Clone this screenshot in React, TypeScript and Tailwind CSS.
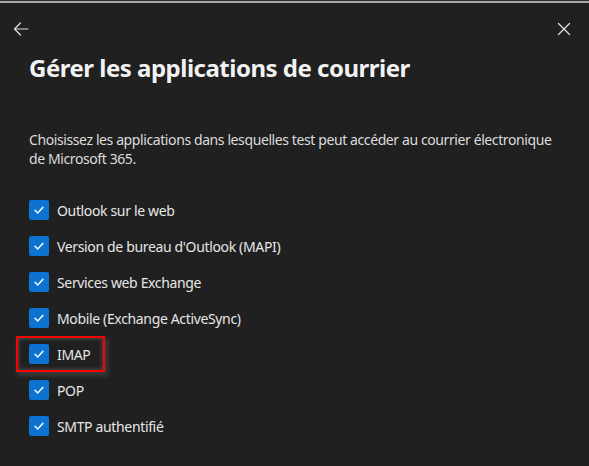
import React from "react";

const apps = [
  "Outlook sur le web",
  "Version de bureau d'Outlook (MAPI)",
  "Services web Exchange",
  "Mobile (Exchange ActiveSync)",
  "IMAP",
  "POP",
  "SMTP authentifié",
];

const Check = () => (
  <span className="flex h-5 w-5 shrink-0 items-center justify-center rounded-[2px] bg-[#0c74d0]">
    <svg width="12" height="12" viewBox="0 0 12 12" fill="none">
      <path d="M2 6.3L4.7 9L10 3.3" stroke="#fff" strokeWidth="1.4" strokeLinecap="round" strokeLinejoin="round" />
    </svg>
  </span>
);

export default function App() {
  return (
    <div
      className="h-[466px] w-[589px] overflow-hidden bg-[#202020] text-[#e6e6e6]"
      style={{ fontFamily: '"Segoe UI", "Noto Sans", "Open Sans", sans-serif' }}
    >
      <div className="h-px bg-[#2a2a2a]" />
      <div className="h-[2px] bg-[#a8a8a8]" />
      <div className="flex items-center justify-between pl-[12px] pr-[18px] pt-[17px]">
        <svg width="18" height="18" viewBox="0 0 18 18" fill="none">
          <path d="M16 9H2.5M8.5 3L2.5 9L8.5 15" stroke="#e0e0e0" strokeWidth="1.2" strokeLinecap="round" strokeLinejoin="round" />
        </svg>
        <svg width="14" height="14" viewBox="0 0 14 14" fill="none">
          <path d="M1.5 1.5L12.5 12.5M12.5 1.5L1.5 12.5" stroke="#e0e0e0" strokeWidth="1.3" strokeLinecap="round" />
        </svg>
      </div>
      <h1 className="mt-[14px] pl-[29px] text-[24px] font-bold leading-[32px] tracking-[-0.5px] text-[#f2f2f2]">
        Gérer les applications de courrier
      </h1>
      <p className="mt-[46px] pl-[29px] pr-[20px] text-[14px] leading-[19px] tracking-[-0.4px] text-[#dcdcdc]">
        Choisissez les applications dans lesquelles test peut accéder au courrier électronique de Microsoft 365.
      </p>
      <ul className="mt-[24px] flex flex-col pl-[29px]">
        {apps.map((a) => (
          <li key={a} className="flex h-[36px] items-center">
            {a === "IMAP" ? (
              <div className="-ml-[13px] flex h-[36px] w-[89px] items-center gap-[8px] border-2 border-[#ff0000] pl-[11px] shadow-[inset_0_0_3px_2px_#3c3c3c,2px_3px_4px_1px_#3a3a3a]">
                <Check />
                <span className="text-[14px] tracking-[-0.35px]">{a}</span>
              </div>
            ) : (
              <div className="flex items-center gap-[8px]">
                <Check />
                <span className="text-[14px] tracking-[-0.35px]">{a}</span>
              </div>
            )}
          </li>
        ))}
      </ul>
    </div>
  );
}
